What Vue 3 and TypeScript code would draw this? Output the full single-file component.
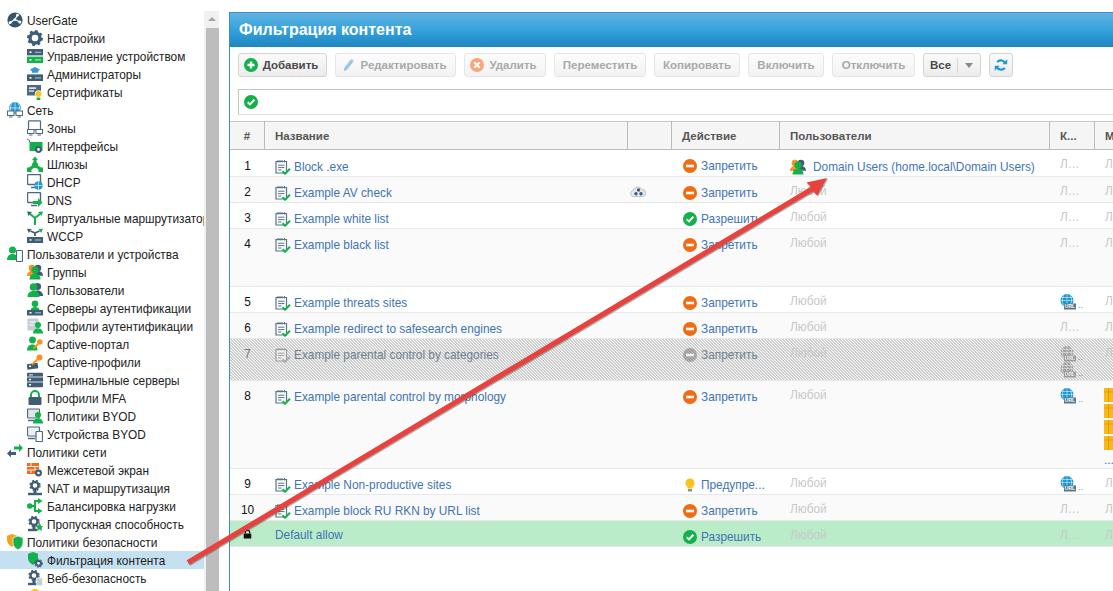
<template>
  <svg class="defs" width="0" height="0" aria-hidden="true">
    <defs>
      <symbol id="i-ug" viewBox="0 0 16 16">
        <circle cx="8" cy="8" r="7.6" fill="#34566f" />
        <path d="M3 10.500 8 7.500 13 10M8 7.500 10.500 3" stroke="#fff" stroke-width="1.200" fill="none" />
        <circle cx="3.200" cy="10.500" r="1.500" fill="#fff" /><circle cx="12.800" cy="10" r="1.500" fill="#fff" /><circle cx="10.500" cy="3.200" r="1.400" fill="#fff" /><circle cx="7.800" cy="7.600" r="1.300" fill="#fff" />
      </symbol>
      <symbol id="i-gear" viewBox="0 0 16 16">
        <circle cx="8" cy="8" r="5" fill="none" stroke="#3f5d75" stroke-width="3.400" />
        <circle cx="8" cy="8" r="6.900" fill="none" stroke="#3f5d75" stroke-width="2.200" stroke-dasharray="2.700 2.700" />
      </symbol>
      <symbol id="i-device" viewBox="0 0 16 16">
        <rect y="1" width="16" height="6.400" fill="#3f5d75" /><rect y="8.600" width="16" height="6.400" fill="#12b14c" />
        <rect x="2.500" y="3.400" width="2" height="1.600" fill="#fff" /><rect x="2.500" y="11" width="2" height="1.600" fill="#fff" /><rect x="8" y="3.800" width="6" height="1" fill="#b7c5d0" /><rect x="8" y="11.400" width="6" height="1" fill="#c4f0d4" />
      </symbol>
      <symbol id="i-admin" viewBox="0 0 16 16">
        <path d="M3 3.600 8 1 13 3.600 11 5.400v1.400H5V5.400Z" fill="#2f9bd6" /><rect y="8.400" width="16" height="6.600" fill="#3f5d75" />
        <rect x="2.500" y="11" width="2" height="1.600" fill="#fff" /><rect x="8" y="11.400" width="6" height="1" fill="#b7c5d0" />
      </symbol>
      <symbol id="i-cert" viewBox="0 0 16 16">
        <rect y="1" width="14" height="10.500" fill="#4d6a80" /><rect x="2" y="3.400" width="7" height="1.400" fill="#fff" /><rect x="2" y="6.400" width="5" height="1.200" fill="#fff" />
        <path d="M10 11.500 9.600 16h3.800L13 11.500Z" fill="#12b14c" /><circle cx="11.500" cy="10" r="3.400" fill="#fbc21b" stroke="#fff" stroke-width=".7" />
      </symbol>
      <symbol id="i-net" viewBox="0 0 16 16">
        <circle cx="8" cy="6" r="6" fill="#2298d6" /><path d="M2 6h12M8 0v12M4.600 1.400c-1.600 3-1.600 6.500 0 9.400M11.400 1.400c1.600 3 1.600 6.500 0 9.400" stroke="#fff" stroke-width=".6" fill="none" />
        <rect x=".5" y="9" width="6.500" height="4.500" fill="#fff" stroke="#4d6a80" /><rect x="9" y="9" width="6.500" height="4.500" fill="#fff" stroke="#4d6a80" />
        <path d="M2 15h3.500M10.500 15H14" stroke="#4d6a80" />
      </symbol>
      <symbol id="i-zones" viewBox="0 0 16 16">
        <rect x="1.500" y=".8" width="12" height="9" rx=".8" fill="#fff" stroke="#4d6a80" stroke-width="1.200" />
        <rect x=".5" y="9.500" width="6.500" height="4" fill="#fff" stroke="#4d6a80" /><rect x="9" y="9.500" width="6.500" height="4" fill="#fff" stroke="#4d6a80" /><path d="M2 15h3.500M10.500 15H14" stroke="#4d6a80" />
      </symbol>
      <symbol id="i-iface" viewBox="0 0 16 16">
        <path d="M0 1 2.500 2.400V4" stroke="#4d6a80" fill="none" /><rect x="2.500" y="4" width="13" height="9" fill="#12b14c" />
        <circle cx="11.500" cy="11.500" r="2.400" fill="#fff" stroke="#3f5d75" stroke-width="2" />
      </symbol>
      <symbol id="i-gateway" viewBox="0 0 16 16">
        <circle cx="8" cy="9" r="3" fill="#12b14c" /><path d="M8 9V3M8 9 2.800 13M8 9l5.200 4" stroke="#12b14c" stroke-width="3" />
        <path d="M5 4 8 .5 11 4ZM0 11.500h4.500V16H0ZM11.500 11.500H16V16h-4.500Z" fill="#12b14c" />
      </symbol>
      <symbol id="i-dhcp" viewBox="0 0 16 16">
        <rect x=".5" y=".5" width="13" height="10" rx="1" fill="#fff" stroke="#4d6a80" stroke-width="1.400" /><path d="M4 13.500h6" stroke="#4d6a80" stroke-width="1.500" />
        <circle cx="11.500" cy="11.500" r="4.300" fill="#2298d6" /><path d="M7.500 11.500h8M11.500 7.500v8" stroke="#fff" stroke-width=".6" />
      </symbol>
      <symbol id="i-dns" viewBox="0 0 16 16">
        <rect x=".5" y=".5" width="13" height="10" rx="1" fill="#fff" stroke="#4d6a80" stroke-width="1.400" /><path d="M4 13.500h6" stroke="#4d6a80" stroke-width="1.500" />
        <path d="M6 9h5V6l4.500 4.500L11 15v-3H6Z" fill="#12b14c" />
      </symbol>
      <symbol id="i-vrouter" viewBox="0 0 16 16">
        <path d="M8 15V8L3 4M8 8l5-4" fill="none" stroke="#12b14c" stroke-width="2" /><path d="M0 1.500 5 2 1.500 6Z" fill="#3f5d75" /><path d="M16 1.500 11 2 14.500 6Z" fill="#12b14c" />
      </symbol>
      <symbol id="i-wccp" viewBox="0 0 16 16">
        <path d="M8 8V5L3.500 3M8 5l4.500-2" fill="none" stroke="#3f5d75" stroke-width="1.800" /><path d="M0 .8 4.500 1 1.800 5Z" fill="#3f5d75" /><path d="M16 .8 11.500 1 14.200 5Z" fill="#12b14c" />
        <rect y="9" width="16" height="6" fill="#3f5d75" /><rect x="2.500" y="11.200" width="2" height="1.500" fill="#fff" /><rect x="8" y="11.500" width="6" height="1" fill="#b7c5d0" />
      </symbol>
      <symbol id="i-userdev" viewBox="0 0 16 16">
        <circle cx="5.500" cy="4" r="3.500" fill="#12b14c" /><path d="M0 14c0-4 2.500-6 5.500-6S11 10 11 14Z" fill="#12b14c" />
        <rect x="9.500" y="4.500" width="6" height="11" rx=".8" fill="#fff" stroke="#4d6a80" stroke-width="1.200" />
      </symbol>
      <symbol id="i-groups" viewBox="0 0 16 16">
        <circle cx="5" cy="4" r="3.300" fill="#f7931e" /><path d="M0 12c0-3 2-5 5-5s4 2 4 5Z" fill="#f7931e" />
        <circle cx="11" cy="4" r="3.300" fill="#3f5d75" /><path d="M8 11c0-3 1-4 3-4s5 1 5 5Z" fill="#3f5d75" />
        <circle cx="8" cy="6" r="3.600" fill="#12b14c" /><path d="M2.500 15.500c0-4 2.500-6 5.500-6s5.500 2 5.500 6Z" fill="#12b14c" />
      </symbol>
      <symbol id="i-users" viewBox="0 0 16 16">
        <circle cx="10.500" cy="4.500" r="3.600" fill="#3f5d75" /><path d="M7 14c0-4 1-5.500 3.500-5.500S16 10 16 14Z" fill="#3f5d75" />
        <circle cx="6.500" cy="5" r="3.800" fill="#12b14c" /><path d="M.5 15c0-4 2.500-6 6-6s6 2 6 6Z" fill="#12b14c" />
      </symbol>
      <symbol id="i-authsrv" viewBox="0 0 16 16">
        <circle cx="8" cy="3.800" r="3.300" fill="#12b14c" /><path d="M3.500 10.500C3.500 8 5.500 7 8 7s4.500 1 4.500 3.500Z" fill="#12b14c" />
        <rect y="10" width="16" height="5.500" fill="#3f5d75" /><rect x="2.500" y="12" width="2" height="1.500" fill="#fff" /><rect x="8" y="12.300" width="6" height="1" fill="#b7c5d0" />
      </symbol>
      <symbol id="i-authprof" viewBox="0 0 16 16">
        <rect x=".5" y=".5" width="11" height="12" rx="1" fill="#c4ced6" /><path d="M2.500 4h6M2.500 7h4" stroke="#fff" stroke-width="1.200" />
        <circle cx="11" cy="7" r="3" fill="#12b14c" /><path d="M6 15.500c0-3.500 2-5 5-5s5 1.500 5 5Z" fill="#12b14c" />
      </symbol>
      <symbol id="i-captive" viewBox="0 0 16 16">
        <circle cx="5.500" cy="4" r="3.400" fill="#12b14c" /><path d="M0 14.500c0-4 2.500-6 5.500-6s5 2 5 6Z" fill="#12b14c" />
        <circle cx="12.800" cy="6" r="2.800" fill="#f7931e" /><path d="M11 8 6.500 12.500" stroke="#f7931e" stroke-width="1.800" />
      </symbol>
      <symbol id="i-capprof" viewBox="0 0 16 16">
        <rect y="9.500" width="11" height="5.500" transform="rotate(-8 5 12)" fill="#3f5d75" /><rect x="2" y="11.500" width="2" height="1.500" fill="#fff" />
        <circle cx="12.500" cy="3.500" r="3" fill="#f7931e" /><path d="M10.500 5.500 5 10.500" stroke="#f7931e" stroke-width="2" />
      </symbol>
      <symbol id="i-term" viewBox="0 0 16 16">
        <rect y=".8" width="16" height="14.400" rx="1" fill="#3f5d75" /><path d="M0 5h16" stroke="#fff" stroke-width=".8" /><path d="M0 10h16" stroke="#fff" stroke-width=".8" />
        <rect x="2" y="2.200" width="4" height="1.400" fill="#b7c5d0" /><rect x="2" y="6.800" width="2" height="1.500" fill="#fff" /><rect x="2" y="12" width="2" height="1.500" fill="#fff" />
      </symbol>
      <symbol id="i-mfa" viewBox="0 0 16 16">
        <path d="M4 7V5a4 4 0 0 1 8 0v2" fill="none" stroke="#12b14c" stroke-width="2" /><rect x="1.500" y="7" width="13" height="8" rx="1" fill="#3f5d75" />
      </symbol>
      <symbol id="i-byodp" viewBox="0 0 16 16">
        <rect x=".5" y="1" width="12" height="9" rx=".8" fill="#dfe5ea" stroke="#4d6a80" stroke-width="1.200" /><path d="M1 12.500h9" stroke="#4d6a80" stroke-width="1.500" />
        <circle cx="11" cy="7" r="3" fill="#12b14c" /><path d="M6 15.500c0-3.500 2-5 5-5s5 1.500 5 5Z" fill="#12b14c" />
      </symbol>
      <symbol id="i-byodd" viewBox="0 0 16 16">
        <rect x=".5" y="1" width="12" height="9" rx=".8" fill="#eef1f4" stroke="#4d6a80" stroke-width="1.200" /><path d="M1 12.500h7" stroke="#4d6a80" stroke-width="1.500" />
        <rect x="9" y="5.500" width="6.500" height="10" rx=".8" fill="#fff" stroke="#4d6a80" stroke-width="1.200" />
      </symbol>
      <symbol id="i-netpol" viewBox="0 0 16 16">
        <path d="M7 2.500h5V0l4 4-4 4V5.500H7Z" fill="#12b14c" /><path d="M9 8H4V5.500l-4 4 4 4V11h5Z" fill="#3f5d75" />
      </symbol>
      <symbol id="i-fw" viewBox="0 0 16 16">
        <rect width="12" height="11" y="1" fill="#f26a21" /><path d="M0 4.500h12M0 8h12M4 1v3.500M8 4.500V8M4 8v3" stroke="#fff" stroke-width=".9" />
        <circle cx="11.500" cy="11" r="2.400" fill="#fff" stroke="#3f5d75" stroke-width="2.100" />
      </symbol>
      <symbol id="i-nat" viewBox="0 0 16 16">
        <circle cx="8" cy="5.500" r="3.500" fill="none" stroke="#3f5d75" stroke-width="2.400" /><circle cx="8" cy="5.500" r="5" fill="none" stroke="#3f5d75" stroke-width="1.400" stroke-dasharray="2 2" />
        <rect x="6.500" y="10" width="3" height="3" fill="#3f5d75" /><rect x="1" y="12.800" width="14" height="2.400" fill="#3f5d75" />
      </symbol>
      <symbol id="i-lb" viewBox="0 0 16 16">
        <circle cx="2.800" cy="8" r="2.800" fill="#12b14c" /><path d="M3 8h4M11 3H8v10h3" fill="none" stroke="#12b14c" stroke-width="2" />
        <path d="M11 0l4.500 3L11 6ZM11 10l4.500 3L11 16Z" fill="#12b14c" />
      </symbol>
      <symbol id="i-bw" viewBox="0 0 16 16">
        <circle cx="7" cy="5.500" r="3.500" fill="none" stroke="#3f5d75" stroke-width="2.400" /><circle cx="7" cy="5.500" r="5" fill="none" stroke="#3f5d75" stroke-width="1.400" stroke-dasharray="2 2" />
        <rect x="5.500" y="10" width="3" height="3" fill="#3f5d75" /><rect x="1" y="12.800" width="9" height="2.400" fill="#3f5d75" /><path d="M12.500 6.500 14 10h2l-1.500 2 .5 3-2.500-1.500L10 15l.5-3L9 10h2Z" fill="#12b14c" />
      </symbol>
      <symbol id="i-secpol" viewBox="0 0 16 16">
        <path d="M0 1.800 5 0l5 1.800v4c0 3.500-2 5.500-5 7-3-1.500-5-3.500-5-7Z" fill="#f7a11a" />
        <path d="M6 3.800 11 2l5 1.800v5c0 3.400-2 5.500-5 7-3-1.500-5-3.600-5-7Z" fill="#12b14c" stroke="#fff" stroke-width=".7" />
      </symbol>
      <symbol id="i-filter" viewBox="0 0 16 16">
        <path d="M1 1.800 6 0l5 1.800v4.500c0 3-2 5-5 6.700-3-1.700-5-3.700-5-6.700Z" fill="#12b14c" />
        <circle cx="11.500" cy="11.300" r="2.500" fill="#fff" stroke="#3f5d75" stroke-width="2.200" /><circle cx="11.500" cy="11.300" r="4.100" fill="none" stroke="#3f5d75" stroke-width="1" stroke-dasharray="1.500 1.500" />
      </symbol>
      <symbol id="i-web" viewBox="0 0 16 16">
        <circle cx="7" cy="5.500" r="3.500" fill="none" stroke="#3f5d75" stroke-width="2.400" /><circle cx="7" cy="5.500" r="5" fill="none" stroke="#3f5d75" stroke-width="1.400" stroke-dasharray="2 2" />
        <rect x="5.500" y="10" width="3" height="3" fill="#3f5d75" /><rect x="1" y="12.800" width="9" height="2.400" fill="#3f5d75" /><rect x="9.500" y="8" width="6" height="7.500" fill="#c4ced6" stroke="#fff" stroke-width=".6" />
      </symbol>
      <symbol id="i-yellow" viewBox="0 0 16 16"><circle cx="8" cy="7" r="6" fill="#fbc21b" /></symbol>
      <symbol id="i-policy" viewBox="0 0 16 16">
        <path d="M1 2.500h10.500v11.500H1Z" fill="#fff" stroke="#587488" stroke-width="1.200" />
        <path d="M3 1v2.500M5 1v2.500M7 1v2.500M9.500 1v2.500" stroke="#587488" /><path d="M3 6.200h6.500M3 8.600h6.500M3 11h3.500" stroke="#587488" />
        <path d="M7.500 12.200 10 14.700 15 9.800" fill="none" stroke="#12b14c" stroke-width="2" />
      </symbol>
      <symbol id="i-plus" viewBox="0 0 14 14">
        <circle cx="7" cy="7" r="7" fill="#12b14c" /><path d="M3.500 7h7M7 3.500v7" stroke="#fff" stroke-width="2.400" />
      </symbol>
      <symbol id="i-pencil" viewBox="0 0 14 16">
        <path d="M1 15.500 1.700 11 9 1.800l3 2.400L4.700 13.400Z" fill="#9cc7e3" /><path d="M10 .5l3 2.400-.8 1-3-2.400Z" fill="#b8d6ea" />
      </symbol>
      <symbol id="i-del" viewBox="0 0 14 14">
        <circle cx="7" cy="7" r="7" fill="#f9a77a" /><path d="m4.300 4.300 5.400 5.400M9.700 4.300l-5.400 5.400" stroke="#fff" stroke-width="2" />
      </symbol>
      <symbol id="i-check" viewBox="0 0 14 14">
        <circle cx="7" cy="7" r="7" fill="#12b14c" /><path d="M3.700 7.200 6 9.400l4.400-4.600" fill="none" stroke="#fff" stroke-width="2" />
      </symbol>
      <symbol id="i-block" viewBox="0 0 14 14">
        <circle cx="7" cy="7" r="7" fill="#f26a12" /><rect x="3" y="5.700" width="8" height="2.600" fill="#fff" />
      </symbol>
      <symbol id="i-bulb" viewBox="0 0 14 14">
        <path d="M7 .5a4.600 4.600 0 0 0-2.500 8.400V10.500h5V8.900A4.600 4.600 0 0 0 7 .5Z" fill="#fbc21b" /><rect x="5" y="11" width="4" height="2.500" fill="#8f8f8f" />
      </symbol>
      <symbol id="i-refresh" viewBox="0 0 16 16">
        <path d="M13 6.500A5.400 5.400 0 0 0 3.600 4.800" fill="none" stroke="#1a97d5" stroke-width="2.400" /><path d="M9.500 7.200h5.500L15.200 1.500Z" fill="#1a97d5" />
        <path d="M3 9.500a5.400 5.400 0 0 0 9.400 1.700" fill="none" stroke="#1a97d5" stroke-width="2.400" /><path d="M6.500 8.800H1L.8 14.500Z" fill="#1a97d5" />
      </symbol>
      <symbol id="i-lock" viewBox="0 0 10 10">
        <path d="M2.600 4.500V3a2.400 2.400 0 0 1 4.800 0v1.500" fill="none" stroke="#111" stroke-width="1.300" /><rect x=".8" y="4.500" width="8.400" height="5.500" fill="#111" />
      </symbol>
      <symbol id="i-url" viewBox="0 0 16 16">
        <circle cx="7" cy="6.500" r="6.500" fill="#1a97d5" /><path d="M.5 6.500h13M7 0v13M3.500 1.500c-1.500 3-1.500 7 0 10M10.500 1.500c1.500 3 1.500 7 0 10M1.500 3.500h11" stroke="#fff" stroke-width=".5" fill="none" />
        <rect x="4" y="9.500" width="12" height="6" fill="#5b7689" />
        <text x="10" y="14.300" font-size="5" font-weight="700" fill="#fff" text-anchor="middle" font-family="Liberation Sans, sans-serif">URL</text>
      </symbol>
      <symbol id="i-cloud" viewBox="0 0 16 12">
        <path d="M3.500 11.500a3 3 0 0 1-.6-5.900A5 5 0 0 1 12 4.500a3.500 3.500 0 0 1 .5 7Z" fill="#e4eaef" stroke="#a9b8c4" stroke-width=".8" />
        <circle cx="8.500" cy="5" r="1.700" fill="#3f5d75" /><circle cx="6" cy="8.800" r="1.700" fill="#3f5d75" /><circle cx="11" cy="8.800" r="1.700" fill="#3f5d75" />
      </symbol>
      <symbol id="i-box" viewBox="0 0 14 14">
        <rect width="14" height="14" fill="#fbb915" /><path d="M4.500 0v14M0 4h14" stroke="#d89a10" />
        <rect x="9" y="7" width="5" height="7" fill="#1a97d5" />
      </symbol>
    </defs>
  </svg>

  <div class="page">
    <aside class="sidebar">
      <nav class="tree">
        <div
          v-for="item in navItems"
          :key="item.label"
          class="tree-row"
          :class="{ top: item.top, selected: item.selected }"
        >
          <svg class="tree-icon"><use :href="'#i-' + item.icon" /></svg>
          <span class="tree-label">{{ item.label }}</span>
        </div>
      </nav>
      <div class="scrollbar">
        <div class="scroll-up"></div>
        <div class="scroll-thumb"></div>
      </div>
    </aside>

    <main class="panel">
      <h1 class="title">Фильтрация контента</h1>

      <div class="toolbar">
        <button
          v-for="b in buttons"
          :key="b.label"
          class="btn"
          :class="{ off: !b.active, iconed: b.icon }"
          :style="{ width: b.width + 'px' }"
        >
          <svg v-if="b.icon" class="btn-icon"><use :href="'#i-' + b.icon" /></svg>
          {{ b.label }}
        </button>
        <button class="btn all">
          <span class="all-label">Все</span><span class="all-caret"></span>
        </button>
        <button class="btn refresh"><svg class="refresh-icon"><use href="#i-refresh" /></svg></button>
      </div>

      <div class="filter">
        <svg class="filter-icon"><use href="#i-check" /></svg>
      </div>

      <table class="rules">
        <colgroup>
          <col style="width: 35px" /><col style="width: 363px" /><col style="width: 44px" /><col style="width: 108px" />
          <col style="width: 270px" /><col style="width: 45px" /><col style="width: 100px" />
        </colgroup>
        <thead>
          <tr>
            <th class="num">#</th>
            <th>Название</th>
            <th></th>
            <th>Действие</th>
            <th>Пользователи</th>
            <th>К...</th>
            <th>М...</th>
          </tr>
        </thead>
        <tbody>
          <tr
            v-for="r in rules"
            :key="r.id"
            :class="{ alt: r.id % 2 === 0, disabled: r.disabled, last: r.last }"
            :style="{ height: r.height + 'px' }"
          >
            <td class="num">
              <svg v-if="r.last" class="lock"><use href="#i-lock" /></svg>
              <template v-else>{{ r.id }}</template>
            </td>
            <td class="name">
              <svg v-if="!r.last" class="policy"><use href="#i-policy" /></svg>
              <span class="link">{{ r.name }}</span>
            </td>
            <td class="extra"><svg v-if="r.cloud" class="cloud"><use href="#i-cloud" /></svg></td>
            <td class="action">
              <svg class="action-icon"><use :href="'#i-' + actionIcon[r.action]" /></svg>
              <span class="link">{{ r.action }}</span>
            </td>
            <td class="users">
              <template v-if="r.domain">
                <svg class="group-icon"><use href="#i-groups" /></svg>
                <span class="link">Domain Users (home.local\Domain Users)</span>
              </template>
              <span v-else class="any">Любой</span>
            </td>
            <td class="narrow">
              <div v-if="r.urls" class="stack">
                <div v-for="n in r.urls" :key="n" class="url-line">
                  <svg class="url-icon"><use href="#i-url" /></svg><span class="dots">..</span>
                </div>
              </div>
              <div v-else class="any clip">Любой</div>
            </td>
            <td class="narrow">
              <div v-if="r.boxes" class="boxes">
                <svg v-for="n in r.boxes" :key="n" class="box"><use href="#i-box" /></svg>
                <span class="box-dots">...</span>
              </div>
              <span v-else class="any">Любой</span>
            </td>
          </tr>
        </tbody>
      </table>
    </main>

    <svg class="arrow" width="1113" height="591" aria-hidden="true">
      <path d="M186.700 560.300 810.700 186.800 806.500 182.500 827 178 817 195.500 813.300 191.200 189.300 564.700Z" />
    </svg>
  </div>
</template>

<script setup lang="ts">
interface NavItem {
  label: string
  icon: string
  top?: boolean
  selected?: boolean
}

interface Rule {
  id: number
  name: string
  action: string
  height: number
  cloud?: boolean
  domain?: boolean
  disabled?: boolean
  last?: boolean
  urls?: number
  boxes?: number
}

const navItems: NavItem[] = [
  { label: 'UserGate', icon: 'ug', top: true },
  { label: 'Настройки', icon: 'gear' },
  { label: 'Управление устройством', icon: 'device' },
  { label: 'Администраторы', icon: 'admin' },
  { label: 'Сертификаты', icon: 'cert' },
  { label: 'Сеть', icon: 'net', top: true },
  { label: 'Зоны', icon: 'zones' },
  { label: 'Интерфейсы', icon: 'iface' },
  { label: 'Шлюзы', icon: 'gateway' },
  { label: 'DHCP', icon: 'dhcp' },
  { label: 'DNS', icon: 'dns' },
  { label: 'Виртуальные маршрутизаторы', icon: 'vrouter' },
  { label: 'WCCP', icon: 'wccp' },
  { label: 'Пользователи и устройства', icon: 'userdev', top: true },
  { label: 'Группы', icon: 'groups' },
  { label: 'Пользователи', icon: 'users' },
  { label: 'Серверы аутентификации', icon: 'authsrv' },
  { label: 'Профили аутентификации', icon: 'authprof' },
  { label: 'Captive-портал', icon: 'captive' },
  { label: 'Captive-профили', icon: 'capprof' },
  { label: 'Терминальные серверы', icon: 'term' },
  { label: 'Профили MFA', icon: 'mfa' },
  { label: 'Политики BYOD', icon: 'byodp' },
  { label: 'Устройства BYOD', icon: 'byodd' },
  { label: 'Политики сети', icon: 'netpol', top: true },
  { label: 'Межсетевой экран', icon: 'fw' },
  { label: 'NAT и маршрутизация', icon: 'nat' },
  { label: 'Балансировка нагрузки', icon: 'lb' },
  { label: 'Пропускная способность', icon: 'bw' },
  { label: 'Политики безопасности', icon: 'secpol', top: true },
  { label: 'Фильтрация контента', icon: 'filter', selected: true },
  { label: 'Веб-безопасность', icon: 'web' },
  { label: 'Инспектирование SSL', icon: 'yellow' },
]

const buttons = [
  { label: 'Добавить', icon: 'plus', active: true, width: 89 },
  { label: 'Редактировать', icon: 'pencil', active: false, width: 121 },
  { label: 'Удалить', icon: 'del', active: false, width: 82 },
  { label: 'Переместить', icon: '', active: false, width: 92 },
  { label: 'Копировать', icon: '', active: false, width: 86 },
  { label: 'Включить', icon: '', active: false, width: 76 },
  { label: 'Отключить', icon: '', active: false, width: 83 },
]

const actionIcon: Record<string, string> = {
  'Запретить': 'block',
  'Разрешить': 'check',
  'Предупре...': 'bulb',
}

const rules: Rule[] = [
  { id: 1, name: 'Block .exe', action: 'Запретить', height: 27, domain: true },
  { id: 2, name: 'Example AV check', action: 'Запретить', height: 26, cloud: true },
  { id: 3, name: 'Example white list', action: 'Разрешить', height: 26 },
  { id: 4, name: 'Example black list', action: 'Запретить', height: 58 },
  { id: 5, name: 'Example threats sites', action: 'Запретить', height: 26, urls: 1 },
  { id: 6, name: 'Example redirect to safesearch engines', action: 'Запретить', height: 26 },
  { id: 7, name: 'Example parental control by categories', action: 'Запретить', height: 42, disabled: true, urls: 2 },
  { id: 8, name: 'Example parental control by morphology', action: 'Запретить', height: 88, urls: 1, boxes: 4 },
  { id: 9, name: 'Example Non-productive sites', action: 'Предупре...', height: 26, urls: 1 },
  { id: 10, name: 'Example block RU RKN by URL list', action: 'Запретить', height: 26 },
  { id: 11, name: 'Default allow', action: 'Разрешить', height: 26, last: true },
]
</script>

<style>
html,
body {
  margin: 0;
  background: #fff;
}
</style>

<style scoped>
.defs {
  position: absolute;
}

.page {
  position: relative;
  display: flex;
  width: 1113px;
  height: 591px;
  overflow: hidden;
  font-family: "Liberation Sans", Arial, sans-serif;
  font-size: 11.85px;
  color: #222;
}

.sidebar {
  display: flex;
  flex: 0 0 229px;
  padding-top: 11px;
  box-sizing: border-box;
}

.tree {
  width: 204px;
  flex: none;
}

.tree-row {
  display: flex;
  align-items: center;
  height: 18px;
  padding-left: 27px;
  white-space: nowrap;
  overflow: hidden;
}

.tree-row.top {
  padding-left: 7px;
}

.tree-row.selected {
  background: #c5e0f0;
}

.tree-icon {
  width: 16px;
  height: 16px;
  flex: none;
  margin-right: 4px;
}

.tree-label {
  padding-top: 2px;
}

.scrollbar {
  width: 15px;
  flex: none;
  background: #f1f1f1;
  height: 620px;
}

.scroll-up {
  height: 17px;
  position: relative;
}

.scroll-up::after {
  content: "";
  position: absolute;
  left: 4px;
  top: 6px;
  border: 4px solid transparent;
  border-top: 0;
  border-bottom: 4px solid #a3a3a3;
}

.scroll-thumb {
  margin-left: 2px;
  height: 600px;
  background: #bdbdbd;
}

.panel {
  flex: none;
  width: 884px;
  margin-top: 12px;
  border-left: 1px solid #3c8dc5;
  box-sizing: border-box;
}

.title {
  margin: 0;
  height: 35px;
  line-height: 33px;
  padding-left: 9px;
  box-sizing: border-box;
  color: #fff;
  font-size: 16px;
  font-weight: 700;
  white-space: nowrap;
  background: linear-gradient(#60b5e3, #2e9dd9 60%, #1f84bd);
  border-top: 1px solid #3c8dc5;
}

.toolbar {
  display: flex;
  gap: 8px;
  padding: 6px 0 0 8px;
  height: 24px;
}

.btn {
  display: flex;
  align-items: center;
  justify-content: center;
  height: 24px;
  padding: 0;
  flex: none;
  box-sizing: border-box;
  border: 1px solid #d5d5d5;
  border-radius: 3px;
  background: linear-gradient(#fafafa, #ececec);
  font: 700 11.5px "Liberation Sans", Arial, sans-serif;
  color: #4a4a4a;
}

.btn.iconed {
  padding-right: 3px;
}

.btn.off {
  color: #a9a9a9;
  border-color: #e6e6e6;
  background: linear-gradient(#fcfcfc, #f3f3f3);
}

.btn-icon {
  width: 14px;
  height: 14px;
  margin-right: 5px;
}

.btn.all {
  width: 58px;
}

.all-label {
  width: 35px;
  text-align: center;
  border-right: 1px solid #d5d5d5;
  line-height: 15px;
}

.all-caret {
  width: 0;
  height: 0;
  margin: 0 7px;
  border: 4px solid transparent;
  border-bottom: 0;
  border-top: 5px solid #888;
}

.btn.refresh {
  width: 24px;
}

.refresh-icon {
  width: 14px;
  height: 16px;
}

.filter {
  display: flex;
  align-items: center;
  height: 26px;
  margin: 12px 0 6px 8px;
  padding-left: 5px;
  box-sizing: border-box;
  border: 1px solid #c4c4c4;
  border-bottom-color: #e0e0e0;
  border-right: 0;
}

.filter-icon {
  width: 14px;
  height: 14px;
}

.rules {
  table-layout: fixed;
  border-collapse: separate;
  border-spacing: 0;
  width: 965px;
}

.rules th {
  height: 29px;
  box-sizing: border-box;
  padding: 0 0 0 10px;
  text-align: left;
  font-size: 11.5px;
  font-weight: 700;
  color: #555;
  background: #f5f5f5;
  border-top: 1px solid #c8c8c8;
  border-bottom: 1px solid #bbb;
  border-right: 1px solid #bbb;
  white-space: nowrap;
}

.rules th.num {
  text-align: center;
  padding: 0;
}

.rules td {
  box-sizing: border-box;
  padding: 7px 0 0 10px;
  vertical-align: top;
  border-bottom: 1px solid #e8e8e8;
  white-space: nowrap;
  overflow: hidden;
}

.rules tr.alt td {
  background: #fafafa;
}

.rules tr.disabled {
  background: linear-gradient(45deg, #cdcdcd 25%, #fff 25% 50%, #cdcdcd 50% 75%, #fff 75%) 0 0 / 3px 3px;
}

.rules tr.disabled td {
  color: #777;
}

.rules tr.disabled svg {
  filter: grayscale(1);
  opacity: 0.6;
}

.rules tr.disabled .link {
  color: #6d7f93;
}

.rules tr.last td {
  background: #bbecca;
}

.rules td.name {
  padding-top: 8px;
}

.rules td.action {
  padding-top: 9px;
  padding-left: 11px;
}

.rules td.num {
  padding-top: 8px;
  padding-left: 0;
  text-align: center;
  color: #111;
}

.rules tr.last td.name {
  padding-top: 7px;
}

.rules tbody tr:first-child td.name,
.rules tbody tr:first-child td.num,
.rules tbody tr:first-child td.users {
  padding-top: 9px;
}

.policy {
  width: 16px;
  height: 16px;
  margin-right: 3px;
  vertical-align: -4px;
}

.link {
  color: #3f74b4;
}

.rules td.extra {
  padding-left: 2px;
}

.cloud {
  display: block;
  width: 16px;
  height: 12px;
  margin-top: 1px;
}

.action-icon {
  width: 14px;
  height: 14px;
  vertical-align: -3px;
  margin-right: 4px;
}

.group-icon {
  width: 16px;
  height: 16px;
  vertical-align: -4px;
  margin-right: 7px;
}

.any {
  color: #c8c8c8;
}

.clip {
  width: 25px;
  overflow: hidden;
  text-overflow: ellipsis;
}

.url-line {
  display: flex;
  align-items: flex-end;
  height: 16px;
}

.url-icon {
  width: 16px;
  height: 16px;
  flex: none;
}

.dots {
  margin-left: 2px;
  font-size: 9px;
  line-height: 9px;
  color: #6d8cae;
}

.boxes {
  display: flex;
  flex-direction: column;
  gap: 2px;
  margin-left: -1px;
}

.box {
  width: 14px;
  height: 14px;
}

.box-dots {
  color: #3f74b4;
  line-height: 10px;
  margin-top: 3px;
}

.lock {
  display: block;
  width: 9px;
  height: 10px;
  margin: 0 auto;
}

.arrow {
  position: absolute;
  left: 0;
  top: 0;
  pointer-events: none;
}

.arrow path {
  fill: #e8423f;
  filter: drop-shadow(1px 1px 0 rgba(70, 70, 70, 0.45));
}
</style>
